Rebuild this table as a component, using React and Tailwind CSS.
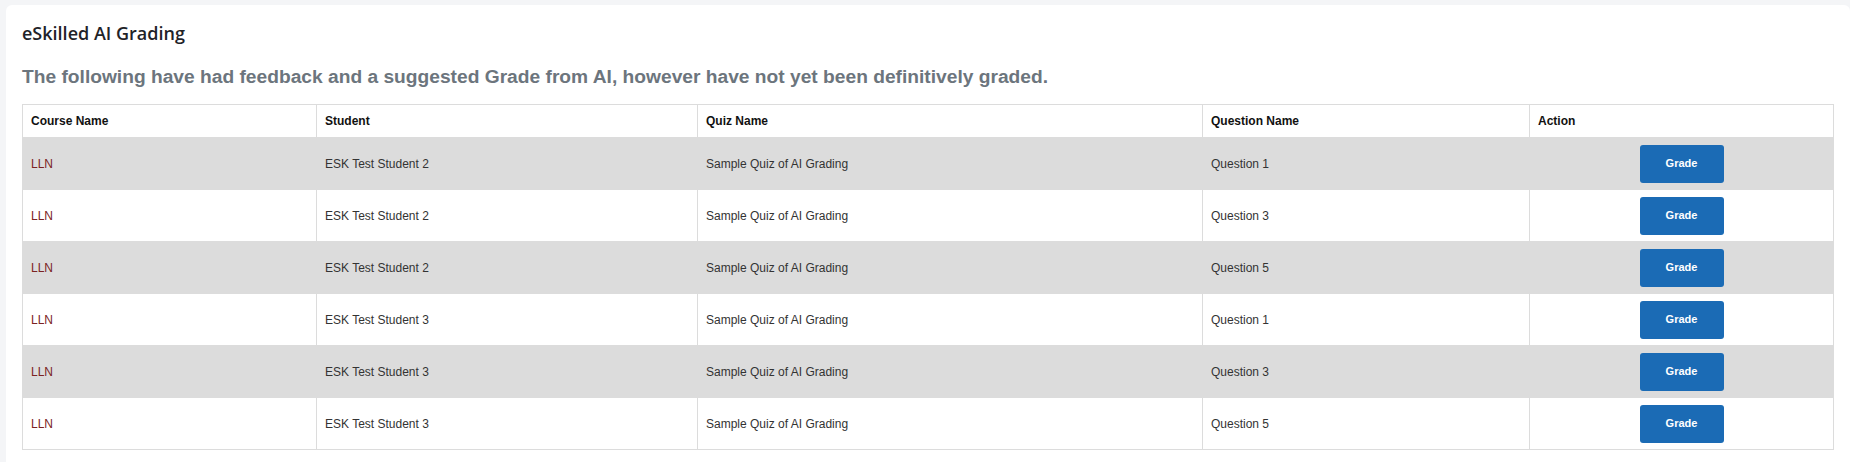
const rows = [
  { course: 'LLN', student: 'ESK Test Student 2', quiz: 'Sample Quiz of AI Grading', question: 'Question 1' },
  { course: 'LLN', student: 'ESK Test Student 2', quiz: 'Sample Quiz of AI Grading', question: 'Question 3' },
  { course: 'LLN', student: 'ESK Test Student 2', quiz: 'Sample Quiz of AI Grading', question: 'Question 5' },
  { course: 'LLN', student: 'ESK Test Student 3', quiz: 'Sample Quiz of AI Grading', question: 'Question 1' },
  { course: 'LLN', student: 'ESK Test Student 3', quiz: 'Sample Quiz of AI Grading', question: 'Question 3' },
  { course: 'LLN', student: 'ESK Test Student 3', quiz: 'Sample Quiz of AI Grading', question: 'Question 5' },
]

const headers = ['Course Name', 'Student', 'Quiz Name', 'Question Name', 'Action']

export default function App() {
  return (
    <div className="min-h-[462px] bg-[#f4f5f7] pl-[6px] pt-[5px] font-['Liberation_Sans',Arial,sans-serif]">
      <div className="min-h-[457px] rounded-tl-md rounded-tr-md bg-white px-4 pt-[15px]">
        <h2 className="font-['Open_Sans',sans-serif] text-[18px] font-semibold leading-[27px] text-[#1f2328]">
          eSkilled AI Grading
        </h2>
        <p className="mt-[18px] text-[19.2px] font-bold leading-[23px] text-[#6c757d]">
          The following have had feedback and a suggested Grade from AI, however have not yet been definitively graded.
        </p>

        <table className="mt-[16px] w-[1811px] table-fixed border-collapse border border-[#dcdcdc] text-[12px]">
          <colgroup>
            <col className="w-[294px]" />
            <col className="w-[381px]" />
            <col className="w-[505px]" />
            <col className="w-[327px]" />
            <col className="w-[304px]" />
          </colgroup>
          <thead>
            <tr className="h-[33px]">
              {headers.map((h) => (
                <th key={h} className="border border-[#dcdcdc] px-2 text-left font-bold text-[#111]">
                  {h}
                </th>
              ))}
            </tr>
          </thead>
          <tbody>
            {rows.map((r, i) => (
              <tr key={i} className={`h-[52px] ${i % 2 === 0 ? 'bg-[#dcdcdc]' : 'bg-white'}`}>
                <td className="border border-[#dcdcdc] px-2 text-[#7b2323]">{r.course}</td>
                <td className="border border-[#dcdcdc] px-2 text-[#333]">{r.student}</td>
                <td className="border border-[#dcdcdc] px-2 text-[#333]">{r.quiz}</td>
                <td className="border border-[#dcdcdc] px-2 text-[#333]">{r.question}</td>
                <td className="border border-[#dcdcdc] px-2 text-center">
                  <button className="h-[38px] w-[84px] rounded-[3px] bg-[#1b6bb5] text-[11px] font-bold text-white">
                    Grade
                  </button>
                </td>
              </tr>
            ))}
          </tbody>
        </table>
      </div>
    </div>
  )
}
